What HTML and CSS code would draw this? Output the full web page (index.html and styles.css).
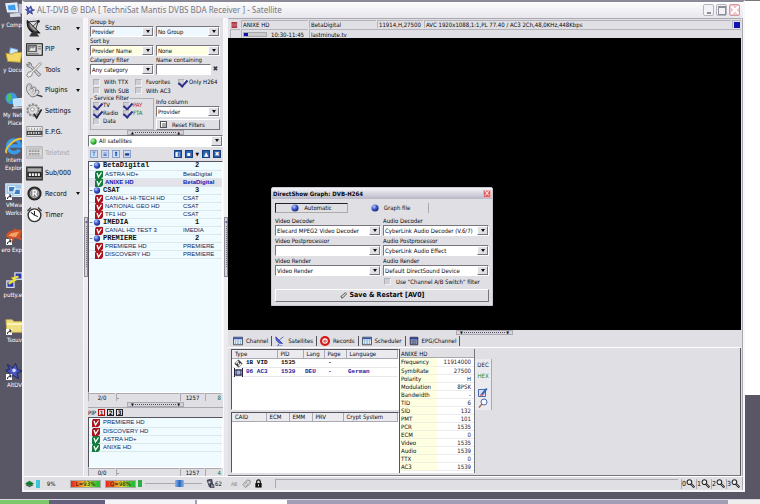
FILE: index.html
```html
<!DOCTYPE html>
<html lang="en">
<head>
<meta charset="utf-8">
<title>ALT-DVB</title>
<link rel="stylesheet" href="styles.css">
</head>
<body>
<svg class="defs" aria-hidden="true">
  <defs>
    <radialGradient id="gBlue" cx=".35" cy=".3" r=".8"><stop offset="0" stop-color="#b9c8ff"/><stop offset=".5" stop-color="#3a55c8"/><stop offset="1" stop-color="#101c6c"/></radialGradient>
    <radialGradient id="gGreen" cx=".35" cy=".3" r=".8"><stop offset="0" stop-color="#b8f5b0"/><stop offset=".6" stop-color="#36b53a"/><stop offset="1" stop-color="#167a20"/></radialGradient>
    <symbol id="ball" viewBox="0 0 8 8"><circle cx="4" cy="4" r="3.6" fill="url(#gBlue)"/></symbol>
    <symbol id="gball" viewBox="0 0 8 8"><circle cx="4" cy="4" r="3.6" fill="url(#gGreen)"/></symbol>
    <symbol id="vred" viewBox="0 0 8 8"><path d="M1 0h7v6l-2 2H0V2z" fill="#a8121c"/><path d="M2 2l1.5 4L6.500 1.500" fill="none" stroke="#fff" stroke-width="1.300"/></symbol>
    <symbol id="vgreen" viewBox="0 0 8 8"><path d="M1 0h7v6l-2 2H0V2z" fill="#127a3a"/><path d="M2 2l1.500 4L6.500 1.500" fill="none" stroke="#fff" stroke-width="1.300"/></symbol>
    <symbol id="lens" viewBox="0 0 10 10"><circle cx="3.800" cy="3.500" r="2.600" fill="#eee" stroke="#222" stroke-width="1.200"/><path d="M5.500 5.500l3.800 3.800" stroke="#222" stroke-width="2.400"/><path d="M6 6l2.700 2.700" stroke="#ddd" stroke-width=".8"/></symbol>
    <symbol id="dish" viewBox="0 0 24 24" overflow="visible"><g transform="scale(1.3) translate(-.5 -1)"><path d="M2 2c-1 8 4 14 13 13z" fill="#444" stroke="#111" stroke-width="1.300"/><path d="M4 4c0 5 4 9 9 9z" fill="#999"/><path d="M3 3l11-1M14 2l-3 9M8 8l6-6" stroke="#222" fill="none"/><circle cx="14" cy="2.500" r="1.500" fill="#222"/><path d="M7 14l-3 5h11l-4-5z" fill="#333"/></g></symbol>
    <symbol id="pip" viewBox="0 0 24 18"><path d="M1 1h22v16H1z" fill="#d8d8da" stroke="#111" stroke-width="1.500"/><path d="M3 3h12v9H3z" fill="#888" stroke="#333"/><path d="M5 9l3-3 2 2 3-3v6H5z" fill="#ddd"/><path d="M17 5h4M17 8h4M3 15h15" stroke="#444"/></symbol>
    <symbol id="tools" viewBox="0 0 24 24"><path d="M3 2l4 1 1 4 13 12-3 3L6 9 2 8 1 4l3 2 1-2z" fill="#ccc" stroke="#555"/><path d="M20 2l2 2-4 4-9 9-1 4-5 2-2-2 2-5 4-1 9-9z" fill="#eee" stroke="#666"/></symbol>
    <symbol id="plug" viewBox="0 0 24 24"><path d="M2 4c4-4 8 1 6 6 3-5 8-3 5 3 4-4 8 0 3 5-4 4-9 4-12-1C0 13 0 8 2 4z" fill="#d6d6d8" stroke="#555"/><path d="M5 5c2 1 2 4 0 7M10 10c1 2 0 4-2 5M14 14l-4 4" fill="none" stroke="#888"/><path d="M15 18c3 2 6 1 8 3" stroke="#444" stroke-width="2" fill="none"/></symbol>
    <symbol id="gear" viewBox="0 0 24 24"><circle cx="10" cy="10" r="8" fill="#d5d5d7" stroke="#888" stroke-width="3" stroke-dasharray="3 2"/><circle cx="10" cy="10" r="7" fill="#ddd" stroke="#888"/><circle cx="9" cy="9" r="2.500" fill="#fff" stroke="#777"/><path d="M11 15l4 6 7-12" fill="none" stroke="#222" stroke-width="2.400"/></symbol>
    <symbol id="epg" viewBox="0 0 24 18"><path d="M1 2h22v14H1z" fill="#eee" stroke="#777"/><path d="M1 8h22v6H1z" fill="#444"/><path d="M4 4v3M8 4v3M12 4v3M16 4v3M20 4v3" stroke="#777"/><path d="M3 11h18" stroke="#fff" stroke-width="2" stroke-dasharray="2 1.500"/></symbol>
    <symbol id="ttx" viewBox="0 0 24 18"><path d="M1 1h22v16H1z" fill="#dcdcde" stroke="#999"/><path d="M3 4h18M3 14h18" stroke="#999"/><path d="M4 7h16M4 11h16" stroke="#999" stroke-width="2.500" stroke-dasharray="3 1"/></symbol>
    <symbol id="sub" viewBox="0 0 24 20"><path d="M1 1h22v18H1z" fill="#777" stroke="#222" stroke-width="1.500"/><path d="M3 3h18v4H3z" fill="#aaa"/><path d="M2 8h20v7H2z" fill="#222"/><path d="M4 11.500h16" stroke="#eee" stroke-width="4" stroke-dasharray="3 1.200"/></symbol>
    <symbol id="rec" viewBox="0 0 24 24"><circle cx="12" cy="12" r="9" fill="#444" stroke="#222" stroke-width="2"/><circle cx="12" cy="12" r="6" fill="#888" stroke="#ccc"/><path d="M10 16V8h3a2 2 0 010 4h-3m3 0l2 4" fill="none" stroke="#fff" stroke-width="1.800"/></symbol>
    <symbol id="timer" viewBox="0 0 24 24"><circle cx="12" cy="13" r="9" fill="#fff" stroke="#333" stroke-width="2"/><path d="M12 7v6l5 2M12 13l-5-4" fill="none" stroke="#222" stroke-width="1.500"/><path d="M2 7l5-5M17 2l5 5" stroke="#444" stroke-width="2"/></symbol>
    <symbol id="bird" viewBox="0 0 24 24"><path d="M3 3l7 5 4-6 3 8 6 2-7 3 2 7-7-4-6 5 1-8-5-4 5-1z" fill="#4a55b8" stroke="#1c2468" stroke-width="1.300"/><circle cx="12" cy="11" r="2.500" fill="#cdd5ff"/></symbol>
    <symbol id="grid" viewBox="0 0 12 10"><path d="M.5.5h11v9H.5z" fill="#fff" stroke="#234"/><path d="M1 1h10v2H1z" fill="#3355b5"/><path d="M2 5h8M2 7.500h8" stroke="#37a" stroke-width="1.200" stroke-dasharray="2 1"/></symbol>
    <symbol id="epgc" viewBox="0 0 12 10"><path d="M1.500.5h9v9h-9z" fill="#9aa6cc" stroke="#223"/><path d="M1 1h10v2H1z" fill="#2c3a98"/><path d="M3 5h6M3 7.500h6" stroke="#334"/></symbol>
    <symbol id="satt" viewBox="0 0 12 12"><path d="M1 1c0 6 4 8 8 8z" fill="#5866d8" stroke="#2c3aa8"/><path d="M5 5l5-4M5 9l-2 3h6" stroke="#4855c0" fill="none"/></symbol>
    <symbol id="recs" viewBox="0 0 12 12"><circle cx="6" cy="6" r="6" fill="#d41818"/><circle cx="6" cy="6" r="2.600" fill="#d41818" stroke="#fff" stroke-width="1.400"/><path d="M6 4v3" stroke="#fff"/></symbol>
    <symbol id="diamond" viewBox="0 0 10 10"><path d="M5 .5L9.500 5 5 9.500.5 5z" fill="#333"/><path d="M2 5l3-3M5 8l3-3" stroke="#fff" stroke-width="1.300"/><circle cx="5" cy="5" r="1" fill="#fff"/></symbol>
    <symbol id="film" viewBox="0 0 9 9"><path d="M.5 0v9M8.500 0v9M0 2h9M0 7h9" stroke="#224"/><path d="M2 2h5v5H2z" fill="#a9b4d8" stroke="#224"/></symbol>
    <symbol id="edit" viewBox="0 0 10 10"><path d="M.5 2.500h7v7h-7z" fill="#cfe0f8" stroke="#4a6ca8"/><path d="M3 7l5-6 1.500 1L5 8z" fill="#2f62b8"/><path d="M2 8h3" stroke="#c33"/></symbol>
    <symbol id="mag" viewBox="0 0 10 10"><circle cx="6" cy="4" r="3" fill="#f4f8ff" stroke="#4b6cae"/><path d="M4 6L1 9.500" stroke="#b46a50" stroke-width="1.500"/></symbol>
    <symbol id="lock" viewBox="0 0 8 10"><path d="M2 5V3a2 2 0 014 0v2" fill="none" stroke="#111" stroke-width="1.300"/><path d="M.5 4.500h7v5h-7z" fill="#111"/><path d="M4 6v2" stroke="#fff"/></symbol>
    <symbol id="tag" viewBox="0 0 10 10"><path d="M1 6l5-5 3 1v3L4 9.500z" fill="#ddd" stroke="#888"/><path d="M3 6l3-3M4 8l3-3" stroke="#999"/></symbol>
    <symbol id="pen" viewBox="0 0 8 8"><path d="M1 5l1 2 2-1 3.500-4L6 .8 2.500 4z" fill="#ddd" stroke="#222" stroke-width=".8"/></symbol>
    <symbol id="spk" viewBox="0 0 8 8"><path d="M1 1l4-1 1 5-3 2z" fill="#556" stroke="#223" stroke-width=".6"/><path d="M4 4l3 1v3H4z" fill="#889" stroke="#223" stroke-width=".6"/><circle cx="3" cy="3" r="1" fill="#ccd"/></symbol>
    <symbol id="sig" viewBox="0 0 10 8"><path d="M5 1l5 3-5 3-5-3z" fill="#158a35"/><path d="M2 4.300h6" stroke="#063"/><path d="M1 5.500l4 2 4-2" stroke="#233" fill="none"/></symbol>
    <symbol id="short" viewBox="0 0 6 6"><path d="M0 0h6v6H0z" fill="#fff"/><path d="M1.500 5c0-2 1-2.500 3-2.500M3 1h1.800v2.500" fill="none" stroke="#111"/></symbol>
    <symbol id="pc" viewBox="0 0 20 20"><path d="M1 2l12-1 1 10H3z" fill="#cfe4fa" stroke="#e9eef8" stroke-width="1.500"/><path d="M3 4l8-1 1 6H4z" fill="#3f9be8"/><path d="M5 13l11-1 2 4-12 1z" fill="#d5d9e4"/><path d="M15 2h4v11h-4z" fill="#b4bdd4"/></symbol>
    <symbol id="docs" viewBox="0 0 20 20"><path d="M6 1l8 2-1 11-9-1z" fill="#cfe8ff" stroke="#7fb0e0"/><path d="M1 7l7 1 3-2h8l-2 11-14-1z" fill="#f3d96a" stroke="#b99a2d"/></symbol>
    <symbol id="net" viewBox="0 0 20 20"><circle cx="7" cy="7" r="6.500" fill="#3c9be0"/><path d="M3 3c4-3 5 2 4 5s-4 3-5 0z" fill="#53c05a"/><path d="M9 8l10-1v8l-9 1z" fill="#bfe0fa" stroke="#e9eef8"/><path d="M8 18l11-1" stroke="#ccd" stroke-width="2"/></symbol>
    <symbol id="ie" viewBox="0 0 20 20"><path d="M16 14A7 7 0 1117 10H5" fill="none" stroke="#3b9be8" stroke-width="4"/><path d="M2 18C-2 14 10 1 19 2" fill="none" stroke="#f0c23a" stroke-width="2"/></symbol>
    <symbol id="vm" viewBox="0 0 20 20"><path d="M1 2h18v14H1z" fill="#9cc6e8" stroke="#dfe9f5" stroke-width="1.500"/><path d="M4 5h7v6H4zM10 8h7v6h-7z" fill="#3d7fc0" stroke="#fff"/></symbol>
    <symbol id="nero" viewBox="0 0 20 20"><path d="M1 10C4 2 9 6 11 1c1 3 5 2 8 2l-2 8 2 4-8-3-4 6-2-5z" fill="#d4532a"/><path d="M4 10c3-5 7-3 12-5l-4 6z" fill="#f2a366"/></symbol>
    <symbol id="putty" viewBox="0 0 20 20"><path d="M11 1h8v7h-8zM2 10h8v7H2z" fill="#2a3aa8" stroke="#d5d9e8" stroke-width="1.500"/><path d="M15 5l-6 2 2 2-7 4" fill="none" stroke="#f0e030" stroke-width="2.500"/></symbol>
    <symbol id="folder" viewBox="0 0 20 20"><path d="M1 3h7l2 2h9v12H2z" fill="#f0df80" stroke="#c0a850"/><path d="M2 8h17" stroke="#fff6bd" stroke-width="2"/></symbol>
  </defs>
</svg>

<div class="desktop">
  <div class="backdrop"></div>
  <ul class="shortcuts">
    <li><svg><use href="#pc"/></svg><span>y Comp</span></li>
    <li><svg><use href="#docs"/></svg><span>y Docu</span></li>
    <li><svg><use href="#net"/></svg><span>My Net<br>Place</span></li>
    <li><svg><use href="#ie"/></svg><span>Intern<br>Explor</span></li>
    <li><svg><use href="#vm"/></svg><svg class="arrow"><use href="#short"/></svg><span>VMwa<br>Works</span></li>
    <li><svg><use href="#nero"/></svg><svg class="arrow"><use href="#short"/></svg><span>ero Exp</span></li>
    <li><svg><use href="#putty"/></svg><span>putty.e</span></li>
    <li><svg><use href="#folder"/></svg><svg class="arrow"><use href="#short"/></svg><span>Tsouv</span></li>
    <li><svg><use href="#bird"/></svg><svg class="arrow"><use href="#short"/></svg><span>AltDV</span></li>
  </ul>

  <main class="window">
    <header class="titlebar">
      <svg><use href="#bird"/></svg>
      <h1>ALT-DVB @ BDA [ TechniSat Mantis DVBS BDA Receiver ] - Satellite</h1>
      <button class="wbtn min" aria-label="Minimize"></button>
      <button class="wbtn max" aria-label="Maximize"></button>
      <button class="wbtn close" aria-label="Close"></button>
    </header>

    <div class="work">
      <nav class="sidebar">
        <button class="more"><svg><use href="#dish"/></svg>Scan</button>
        <button class="more"><svg><use href="#pip"/></svg>PIP</button>
        <button class="more"><svg><use href="#tools"/></svg>Tools</button>
        <button class="more"><svg><use href="#plug"/></svg>Plugins</button>
        <button><svg><use href="#gear"/></svg>Settings</button>
        <button><svg><use href="#epg"/></svg>E.P.G.</button>
        <button disabled><svg><use href="#ttx"/></svg>Teletext</button>
        <button><svg><use href="#sub"/></svg>Sub/000</button>
        <button class="more"><svg><use href="#rec"/></svg>Record</button>
        <button><svg><use href="#timer"/></svg>Timer</button>
      </nav>
      <div class="vgrip"></div>

      <section class="left">
        <form class="filters">
          <label for="g1">Group by</label><i></i>
          <span class="combo sky"><select id="g1"><option>Provider</option></select></span>
          <span class="combo sky"><select aria-label="Second group"><option>No Group</option></select></span>
          <label for="s1">Sort by</label><i></i>
          <span class="combo cream"><select id="s1"><option>Provider Name</option></select></span>
          <span class="combo cream"><select aria-label="Second sort"><option>None</option></select></span>
          <label for="c1">Category filter</label><label for="n1">Name containing</label>
          <span class="combo"><select id="c1"><option>Any category</option></select></span>
          <span class="find"><input type="text" id="n1"><button type="button" aria-label="Clear">✖</button></span>
        </form>
        <div class="checks">
          <label><input type="checkbox">With TTX</label>
          <label><input type="checkbox">Favorites</label>
          <label><input type="checkbox" checked>Only H264</label>
          <label><input type="checkbox">With SUB</label>
          <label><input type="checkbox">With AC3</label>
        </div>
        <div class="service">
          <fieldset>
            <legend>Service Filter</legend>
            <label><input type="checkbox" checked>TV</label>
            <label class="red"><input type="checkbox" checked>PAY</label>
            <label><input type="checkbox" checked>Radio</label>
            <label class="green"><input type="checkbox" checked>FTA</label>
            <label><input type="checkbox">Data</label>
          </fieldset>
          <div class="info">
            <label for="i1">Info column</label>
            <span class="combo"><select id="i1"><option>Provider</option></select></span>
            <button class="reset"><b></b>Reset Filters</button>
          </div>
        </div>
        <div class="hgrip"><span>▲<i></i>▲</span></div>
        <div class="sat"><svg><use href="#gball"/></svg><span class="combo"><select aria-label="Satellite"><option>All satellites</option></select></span></div>
        <div class="tools">
          <button aria-label="Expand" class="pale">T</button><button aria-label="Collapse" class="pale">≡</button><button aria-label="Up" class="pale">⬆</button><button aria-label="Print" class="pale">▬</button>
          <span></span>
          <button aria-label="Copy">◧</button><button aria-label="Save">▪</button><em>▼</em><button aria-label="Import">▲</button><button aria-label="Export">✖</button>
        </div>
        <div class="list channels">
          <table>
            <tr class="group"><th><i>-</i><svg><use href="#ball"/></svg>BetaDigital</th><td>2</td></tr>
            <tr><th><svg><use href="#vgreen"/></svg>ASTRA HD+</th><td>BetaDigital</td></tr>
            <tr class="sel"><th><svg><use href="#vgreen"/></svg>ANIXE HD</th><td>BetaDigital</td></tr>
            <tr class="group"><th><i>-</i><svg><use href="#ball"/></svg>CSAT</th><td>3</td></tr>
            <tr><th><svg><use href="#vred"/></svg>CANAL+ HI-TECH HD</th><td>CSAT</td></tr>
            <tr><th><svg><use href="#vred"/></svg>NATIONAL GEO HD</th><td>CSAT</td></tr>
            <tr><th><svg><use href="#vred"/></svg>TF1 HD</th><td>CSAT</td></tr>
            <tr class="group"><th><i>-</i><svg><use href="#ball"/></svg>IMEDIA</th><td>1</td></tr>
            <tr><th><svg><use href="#vred"/></svg>CANAL HD TEST 3</th><td>IMEDIA</td></tr>
            <tr class="group"><th><i>-</i><svg><use href="#ball"/></svg>PREMIERE</th><td>2</td></tr>
            <tr><th><svg><use href="#vred"/></svg>PREMIERE HD</th><td>PREMIERE</td></tr>
            <tr><th><svg><use href="#vred"/></svg>DISCOVERY HD</th><td>PREMIERE</td></tr>
          </table>
        </div>
        <div class="counts"><span>2/0</span><span>-</span><span>1257</span><span class="g">8</span></div>
        <div class="hgrip low"><span>▼<i></i>▼</span></div>
        <div class="piphead">PIP <button class="on">1</button><button>2</button><button>3</button></div>
        <div class="list piplist">
          <table>
            <tr><th><svg><use href="#vred"/></svg>PREMIERE HD</th></tr>
            <tr><th><svg><use href="#vred"/></svg>DISCOVERY HD</th></tr>
            <tr><th><svg><use href="#vgreen"/></svg>ASTRA HD+</th></tr>
            <tr><th><svg><use href="#vgreen"/></svg>ANIXE HD</th></tr>
          </table>
        </div>
        <div class="counts"><span>0/0</span><span>-</span><span>1257</span><span class="g">4</span></div>
      </section>
      <div class="vgrip"></div>

      <section class="main">
        <div class="infobar">
          <span class="x">▩</span><span>ANIXE HD</span><span>BetaDigital</span><span>11914,H,27500</span><span>AVC 1920x1088,1:1,PL 77.40 / AC3 2Ch,48,0KHz,448Kbps</span><span class="led"><b></b></span>
        </div>
        <div class="infobar second">
          <span></span><span class="time"><b></b>10:30-11:45</span><span>lastminute.tv</span>
        </div>
        <div class="video"></div>
        <div class="hgrip mid"><span>▼<i></i>▼</span></div>
        <div class="tabs">
          <button class="cur"><svg><use href="#grid"/></svg>Channel</button>
          <button><svg><use href="#satt"/></svg>Satellites</button>
          <button><svg><use href="#recs"/></svg>Records</button>
          <button><svg><use href="#grid"/></svg>Scheduler</button>
          <button><svg><use href="#epgc"/></svg>EPG/Channel</button>
        </div>
        <div class="bottom">
          <div class="tables">
            <div class="sunk">
              <table class="pids">
                <thead><tr><th>Type</th><th>PID</th><th>Lang</th><th>Page</th><th>Language</th></tr></thead>
                <tbody>
                  <tr><td><svg><use href="#diamond"/></svg>1B VID</td><td>1535</td><td></td><td>-</td><td></td></tr>
                  <tr class="blue"><td><svg><use href="#film"/></svg>06 AC3</td><td>1539</td><td>DEU</td><td>-</td><td>German</td></tr>
                </tbody>
              </table>
            </div>
            <div class="sunk">
              <table class="pids ca">
                <thead><tr><th>CAID</th><th>ECM</th><th>EMM</th><th>PRV</th><th>Crypt System</th></tr></thead>
              </table>
            </div>
          </div>
          <div class="props">
            <h2>ANIXE HD</h2>
            <table>
              <tr><th>Frequency</th><td>11914000</td></tr>
              <tr><th>SymbRate</th><td>27500</td></tr>
              <tr><th>Polarity</th><td>H</td></tr>
              <tr><th>Modulation</th><td>8PSK</td></tr>
              <tr><th>Bandwidth</th><td>-</td></tr>
              <tr><th>TID</th><td>6</td></tr>
              <tr><th>SID</th><td>132</td></tr>
              <tr><th>PMT</th><td>101</td></tr>
              <tr><th>PCR</th><td>1535</td></tr>
              <tr><th>ECM</th><td>0</td></tr>
              <tr><th>Video</th><td>1535</td></tr>
              <tr><th>Audio</th><td>1539</td></tr>
              <tr><th>TTX</th><td>0</td></tr>
              <tr><th>AC3</th><td>1539</td></tr>
            </table>
          </div>
          <div class="modes">
            <button>DEC</button><button class="hex">HEX</button>
            <button aria-label="Edit"><svg><use href="#edit"/></svg></button>
            <button aria-label="Find"><svg><use href="#mag"/></svg></button>
          </div>
        </div>
      </section>
    </div>

    <footer class="status">
      <svg><use href="#sig"/></svg>
      <span class="cpu">9%</span>
      <span class="meter">L=93%</span>
      <span class="meter">Q=98%</span>
      <span class="bar"></span>
      <input type="range" min="0" max="100" value="62" aria-label="Volume">
      <svg><use href="#spk"/></svg>
      <span class="vol">62</span>
      <span class="ab">AB</span>
      <svg><use href="#tag"/></svg>
      <svg><use href="#lock"/></svg>
      <span class="message"></span>
      <button>0<svg><use href="#lens"/></svg></button><button>1<svg><use href="#lens"/></svg></button><button>2<svg><use href="#lens"/></svg></button><button>3<svg><use href="#lens"/></svg></button>
    </footer>
  </main>

  <section class="dialog" role="dialog" aria-labelledby="dt">
    <header><h2 id="dt">DirectShow Graph: DVB-H264</h2><button aria-label="Close">×</button></header>
    <div class="dtabs">
      <button class="cur"><svg><use href="#ball"/></svg>Automatic</button>
      <button><svg><use href="#ball"/></svg>Graph file</button>
    </div>
    <div class="dgrid">
      <label for="vd">Video Decoder</label><label for="ad">Audio Decoder</label>
      <span class="combo"><select id="vd"><option>Elecard MPEG2 Video Decoder</option></select></span>
      <span class="combo"><select id="ad"><option>CyberLink Audio Decoder (V.6/7)</option></select></span>
      <label for="vp">Video Postprocessor</label><label for="ap">Audio Postprocessor</label>
      <span class="combo"><select id="vp"><option></option></select></span>
      <span class="combo"><select id="ap"><option>CyberLink Audio Effect</option></select></span>
      <label for="vr">Video Render</label><label for="ar">Audio Render</label>
      <span class="combo"><select id="vr"><option>Video Render</option></select></span>
      <span class="combo"><select id="ar"><option>Default DirectSound Device</option></select></span>
      <label class="ab-switch"><input type="checkbox">Use "Channel A/B Switch" filter</label>
    </div>
    <button class="save"><svg><use href="#pen"/></svg>Save &amp; Restart [AV0]</button>
  </section>

  <footer class="taskbar"><b class="start"></b><b class="dark"></b><b class="app"></b><b class="app2"></b><b class="rest"></b><b class="tray"></b></footer>
</div>
</body>
</html>
```
FILE: styles.css
```css
:root {
  --face: #e0dfe3;
  --shade: #9a99a2;
  --ink: #08080e;
  --sky: #effbff;
}
* { box-sizing: border-box; }
html, body { height: 100%; }
body {
  margin: 0;
  font: 6px/8px "DejaVu Sans Condensed", "DejaVu Sans", sans-serif;
  color: var(--ink);
}
button, select, input { font: inherit; color: inherit; margin: 0; padding: 0; border: 0; border-radius: 0; background: none; }
h1, h2, ul, fieldset, legend { margin: 0; padding: 0; font: inherit; }
table { border-collapse: collapse; border-spacing: 0; width: 100%; table-layout: fixed; }
th, td { padding: 0; text-align: left; font-weight: normal; white-space: nowrap; }
svg { display: block; flex: none; }
.defs { position: absolute; width: 0; height: 0; }

.desktop { position: relative; height: 100%; overflow: hidden; background: #595766; }
.backdrop { position: absolute; top: 0; right: 0; width: 16px; height: 395px; background: #fff; border-top: 1px solid #777; }

/* Desktop shortcuts */
.shortcuts { position: absolute; top: 2px; left: 0; width: 22px; list-style: none; color: #fff; text-align: right; }
.shortcuts li { position: relative; height: 45px; line-height: 8px; }
.shortcuts svg { width: 18px; height: 18px; margin: 0 0 1px 5px; }
.shortcuts span { display: block; white-space: nowrap; }
.shortcuts .arrow { position: absolute; left: 1px; top: 12px; width: 6px; height: 6px; }

/* Main window */
.window {
  position: absolute; inset: 0 15px 12px 22px;
  display: flex; flex-direction: column;
  background: var(--face);
  border: 2px solid #f4f4f7; border-top: 2px solid #8b8a98; border-right-color: #f8f8fa;
  box-shadow: inset -1px 0 #aaa9b2;
}
.titlebar {
  display: flex; align-items: center; gap: 2px; height: 16px; padding: 0 3px 0 1px;
  background: linear-gradient(#fdfdfe, #e6e6ec);
}
.titlebar svg { width: 10px; height: 10px; }
.titlebar h1 { flex: 1; font: 8px/14px "Noto Sans", sans-serif; color: #77777f; white-space: nowrap; }
.wbtn { width: 11px; height: 12px; border: 1px solid #b5b5c0; border-radius: 2px; background: #f3f3f7; display: grid; place-items: center; }
.wbtn::before { content: ""; width: 6px; height: 6px; border: 1px solid #8d8d9a; border-top-width: 2px; }
.wbtn.min::before { border-width: 0 0 2px; width: 4px; }
.wbtn.close { background: #f0c4c8; border-color: #d09ca4; }
.wbtn.close::before { border: 0; width: 8px; height: 8px; background: linear-gradient(45deg, transparent 43%, #fff 43% 57%, transparent 57%), linear-gradient(-45deg, transparent 43%, #fff 43% 57%, transparent 57%); }
.work { flex: 1; display: flex; min-height: 0; }

/* Sidebar */
.sidebar { width: 59px; height: 207px; display: grid; grid-template-rows: repeat(10, 1fr); font-size: 7px; flex: none; }
.sidebar button { display: flex; align-items: center; gap: 2px; padding: 0 3px 0 2px; text-align: left; }
.sidebar svg { width: 17px; height: 17px; }
.sidebar button:disabled { color: #aaa9b0; }
.more::after, .combo::after { content: ""; border: solid transparent; border-width: 3px 2px 0; border-top-color: #111; }
.more::after { margin-left: auto; }

.vgrip { width: 5px; flex: none; background: linear-gradient(#f7f7f9, #e6e6ea); display: flex; align-items: center; border-left: 1px solid #f8f8fa; }
.vgrip::before { content: "◂"; width: 4px; height: 58px; font-size: 4px; line-height: 8px; border: 1px solid #8c8b95; background: repeating-linear-gradient(#77767f 0 1px, #d6d5dc 1px 2px) 1px 8px/1px 42px no-repeat #d6d5dc; }

/* Combo boxes */
.combo { position: relative; display: flex; height: 11px; background: #fff; border: 1px solid #77767f; border-right-color: #fff; border-bottom-color: #fff; }
.combo select { appearance: none; flex: 1; min-width: 0; padding: 0 10px 0 1px; line-height: 8px; background: transparent; }
.combo::before { content: ""; position: absolute; right: 0; top: 0; bottom: 0; width: 9px; background: var(--face); border: 1px solid #fff; border-right-color: #77767f; border-bottom-color: #77767f; pointer-events: none; }
.combo::after { position: absolute; right: 3px; top: 3px; pointer-events: none; }
.sky { background: #eff8ff; }
.cream { background: #ffffe3; }

/* Tick boxes */
input[type=checkbox] { appearance: none; width: 7px; height: 7px; background: #cfced4; border: 1px solid #b0afb6; border-right-color: #f2f2f4; border-bottom-color: #f2f2f4; flex: none; position: relative; }
input[type=checkbox]:checked::before { content: ""; position: absolute; left: 1px; top: -2px; width: 4px; height: 7px; border: solid #2b3288; border-width: 0 2px 2px 0; transform: rotate(42deg); }

/* Left panel */
.left { width: 135px; flex: none; display: flex; flex-direction: column; }
.filters { display: grid; grid-template-columns: 64px 64px; column-gap: 2px; padding: 0 2px; }
.filters label, .filters i { height: 8px; line-height: 8px; }
.find { display: flex; height: 11px; }
.find input { flex: 1; min-width: 0; background: #fff; border: 1px solid #77767f; border-right-color: #fff; border-bottom-color: #fff; }
.find button { width: 9px; font-size: 7px; line-height: 9px; color: #333; }
.checks { display: grid; grid-template-columns: 42px 43px 46px; padding: 3px 0 0 5px; height: 20px; }
.checks label, .service label { display: flex; align-items: center; gap: 4px; height: 8px; white-space: nowrap; }
.service label { gap: 3px; }
.service { display: grid; grid-template-columns: 64px 64px; column-gap: 2px; padding: 0 2px; height: 34px; }
.service fieldset { display: grid; grid-template-columns: 30px 30px; border: 1px solid #b0afb6; padding: 0 0 1px 2px; min-width: 0; align-content: start; }
.service legend { height: 6px; line-height: 6px; padding: 0 1px; }
.red { color: #b8202a; }
.green { color: #1a7a2c; }
.info { display: flex; flex-direction: column; padding-top: 3px; }
.reset { display: flex; align-items: center; gap: 5px; height: 11px; margin-top: 2px; padding-left: 3px; border: 1px solid #fff; border-right-color: #77767f; border-bottom-color: #77767f; }
.reset b { width: 7px; height: 7px; border: 1px solid #555; background: #aaa; box-shadow: inset 1px 1px #fff; }

.hgrip { height: 6px; display: flex; justify-content: center; align-items: center; }
.hgrip span { width: 57px; height: 5px; display: flex; justify-content: space-between; align-items: center; padding: 0 3px; border: 1px solid #aaa9b2; font-size: 4px; line-height: 3px; background: #d4d3d9; }
.hgrip i { flex: 1; height: 1px; margin: 0 1px; background: repeating-linear-gradient(90deg, #55545e 0 1px, transparent 1px 2px); }

.sat { position: relative; }
.sat .combo { height: 12px; }
.sat select { padding-left: 10px; }
.sat svg { position: absolute; z-index: 1; left: 2px; top: 3px; width: 7px; height: 7px; }
.tools { display: flex; align-items: center; gap: 3px; height: 14px; padding: 0 2px; }
.tools span { flex: 1; }
.tools em { font-style: normal; font-size: 5px; }
.tools button { width: 8px; height: 8px; font-size: 6px; line-height: 6px; color: #fff; background: #2866b0; border: 1px solid #173f80; }
.tools .pale { background: #cddcf2; color: #1c3a8c; border-color: #8aa2cc; }

.list { background: var(--sky); border: 1px solid #55545e; border-right-color: #fff; border-bottom-color: #fff; overflow: hidden; font-family: "Liberation Sans", sans-serif; color: #141e58; }
.channels { flex: 1; min-height: 0; }
.channels th { width: 94px; }
.list tr { height: 8px; }
.list th, .list td { height: 8px; line-height: 7px; border-bottom: 1px solid #dbe8ee; }
.list th { padding-left: 16px; position: relative; }
.list th svg { position: absolute; left: 6px; top: 0; width: 8px; height: 8px; }
.list .group th, .list .group td { font: bold 7px/7px "Liberation Mono", monospace; color: #111; }
.list .group th { padding-left: 14px; }
.list .group svg { left: 4px; height: 7px; }
.list .group i { position: absolute; left: 0; top: 0; color: #667; }
.list .group td { padding-left: 12px; }
.list .sel th, .list .sel td { background: #e2e2e8; color: #1818b0; font-weight: bold; }
.counts { display: grid; grid-template-columns: 27px 63px 24px 1fr; height: 8px; column-gap: 1px; padding: 0 2px 0 0; flex: none; }
.counts span { border: 1px solid #aaa9b2; border-width: 1px 0 0 1px; text-align: center; line-height: 7px; }
.counts span:nth-child(2) { text-align: left; }
.counts .g { text-align: right; color: #1a6a2c; }
.piphead { display: flex; align-items: center; gap: 2px; height: 10px; border-top: 1px solid #aaa9b2; flex: none; }
.piphead button { width: 7px; height: 7px; line-height: 5px; border: 1px solid #222; font-weight: bold; }
.piphead .on { border-color: #a11; color: #a11; }
.piplist { height: 51px; padding-top: 1px; flex: none; }
.piplist th { padding-left: 14px; }
.piplist th svg { left: 3px; }

/* Picture area */
.main { flex: 1; min-width: 0; display: flex; flex-direction: column; margin-right: 2px; }
.infobar { display: grid; grid-template-columns: 10px 67px 67px 46px 1fr 9px; column-gap: 1px; height: 10px; padding: 1px 0 0 2px; border-top: 1px solid #aaa9b2; }
.infobar span { border: 1px solid #b5b4bc; border-width: 1px 0 0 1px; line-height: 7px; padding-left: 1px; white-space: nowrap; min-width: 0; display: flex; align-items: center; }
.infobar.second { grid-template-columns: 10px 67px 1fr; border-top: 0; }
.infobar .x { color: #a11; border: 0; font-size: 8px; }
.led b { width: 6px; height: 6px; background: #1414b4; }
.infobar .time { gap: 4px; }
.time b { width: 24px; height: 5px; border: 1px solid #aaa; background: linear-gradient(90deg, #1414b4 4px, #ccc 4px); flex: none; }
.video { flex: 1; background: #000; }
.hgrip.mid { height: 5px; }
.tabs { display: flex; height: 13px; padding: 0 2px; border-bottom: 1px solid #fff; }
.tabs button { display: flex; align-items: center; gap: 3px; padding: 0 3px; border-right: 1px solid #55545e; margin: 1px 0; white-space: nowrap; }
.tabs svg { width: 10px; height: 10px; }
.bottom { display: flex; height: 128px; padding: 1px 0 2px 3px; border-bottom: 1px solid #77767f; border-right: 1px solid #55545e; }
.tables { width: 168px; display: grid; grid-template-rows: 1fr 1fr; row-gap: 2px; }
.sunk { background: #fff; border: 1px solid #55545e; border-right-color: #fff; border-bottom-color: #fff; overflow: hidden; }
.pids th { height: 8px; background: #ebeaee; border-right: 1px solid #aaa9b2; border-bottom: 1px solid #aaa9b2; padding-left: 3px; line-height: 7px; }
.pids th:nth-child(1) { width: 45px; }
.pids th:nth-child(2) { width: 26px; }
.pids th:nth-child(3) { width: 21px; }
.pids th:nth-child(4) { width: 22px; }
.ca th:nth-child(1) { width: 34px; }
.ca th:nth-child(2), .ca th:nth-child(3) { width: 23px; }
.ca th:nth-child(4) { width: 31px; }
.pids td { font: bold 6px/8px "Liberation Mono", monospace; height: 9px; padding-left: 4px; border-bottom: 1px solid #e8e8ec; }
.pids td:first-child { position: relative; padding-left: 14px; }
.pids td:nth-child(3), .pids td:nth-child(5) { padding-left: 2px; }
.pids svg { position: absolute; left: 2px; top: 0; width: 9px; height: 9px; }
.blue { color: #1a1a9c; }
.props { width: 76px; background: #fff; border-left: 1px solid #55545e; border-right: 1px solid #77767f; }
.props h2 { height: 9px; line-height: 9px; padding-left: 1px; background: var(--face); border-bottom: 1px solid #aaa9b2; }
.props tr { height: 8px; }
.props th { width: 37px; background: #ffffe1; padding-left: 1px; line-height: 7px; border-bottom: 1px solid #f1f1e0; }
.props td { text-align: right; padding-right: 3px; line-height: 7px; color: #16183c; border-bottom: 1px solid #ececf0; }
.modes { display: flex; flex-direction: column; gap: 2px; width: 17px; margin-top: 10px; height: 51px; padding-top: 1px; align-items: center; border-right: 1px solid #aaa9b2; background: #ebeaee; color: #223; }
.modes button { height: 9px; }
.modes svg { width: 10px; height: 10px; }
.hex { color: #1c8a34; }
.modes .hex { margin-bottom: 5px; }

/* Status bar */
.status { display: flex; align-items: center; height: 14px; padding: 0 2px 0 1px; border-top: 1px solid #fff; flex: none; }
.status svg { width: 9px; height: 9px; }
.cpu { width: 30px; height: 8px; margin-left: 2px; border-left: 4px solid #3cc8d8; padding-right: 4px; text-align: center; }
.meter { width: 31px; height: 8px; margin-left: 4px; border: 1px solid #aaa; text-align: center; line-height: 6px; background: linear-gradient(90deg, #e8221c, #f0902a 35%, #e4e030 55%, #28c030 90%); }
.bar { width: 4px; height: 7px; margin-left: 2px; background: #2fae42; }
.status input { appearance: none; width: 57px; height: 8px; margin: 0 4px 0 3px; background: linear-gradient(#aaa9b2, #aaa9b2) center/100% 1px no-repeat; }
.status input::-webkit-slider-thumb { appearance: none; width: 9px; height: 7px; background: linear-gradient(90deg, #8fb6e8, #2c68c0, #8fb6e8); border-radius: 1px; }
.status .vol { width: 16px; }
.ab { width: 11px; font-size: 5px; color: #888; }
.status .ab + svg { margin-right: 3px; }
.message { flex: 1; height: 9px; margin: 0 3px 0 12px; border: 1px solid #aaa9b2; border-width: 1px 0 0 1px; }
.status button { display: flex; align-items: center; width: 15px; border-left: 1px solid #aaa9b2; font-size: 7px; line-height: 10px; }

/* Graph dialog */
.dialog { position: absolute; left: 271px; top: 187px; width: 222px; padding: 0 3px 3px; background: var(--face); border: 1px solid #c9c9d2; border-radius: 2px 2px 0 0; }
.dialog header { display: flex; align-items: center; height: 11px; margin: 0 -3px; padding: 0 1px; background: linear-gradient(#f4f4f8, #b9b8c8); }
.dialog h2 { flex: 1; font-weight: bold; line-height: 10px; }
.dialog header button { width: 8px; height: 8px; line-height: 6px; font-size: 8px; background: #d8606a; color: #fff; border: 1px solid #f0b0b4; }
.dtabs { display: flex; padding-top: 4px; gap: 5px; height: 17px; }
.dtabs button { width: 76px; height: 10px; display: flex; align-items: center; justify-content: center; gap: 5px; border-right: 1px solid #aaa9b2; }
.dtabs .cur { width: 73px; border: 1px solid #22222a; border-right-color: #aaa; border-bottom-color: #aaa; }
.dtabs svg { width: 8px; height: 8px; }
.dgrid { display: grid; grid-template-columns: 1fr 1fr; column-gap: 2px; }
.dgrid label { height: 9px; line-height: 9px; }
.dgrid .ab-switch { grid-column: 2; display: flex; align-items: center; gap: 5px; height: 11px; padding-left: 1px; }
.save { width: 100%; height: 13px; display: flex; align-items: center; justify-content: center; gap: 3px; margin-top: 2px; font-size: 7px; font-weight: bold; line-height: 9px; border: 1px solid #fff; border-right-color: #77767f; border-bottom-color: #77767f; }
.save svg { width: 7px; height: 7px; }

/* Task bar sliver */
.taskbar { position: absolute; inset: auto 0 0; height: 5px; display: flex; background: #a19db5; border-top: 1px solid #d8d6e2; }
.start { width: 49px; background: #7cc86a; }
.dark { width: 56px; background: #62607c; }
.app { width: 90px; background: #f4f4f8; margin-right: 2px; }
.app2 { width: 90px; background: #fff; }
.rest { flex: 1; }
.tray { width: 32px; background: #eee; }
```
